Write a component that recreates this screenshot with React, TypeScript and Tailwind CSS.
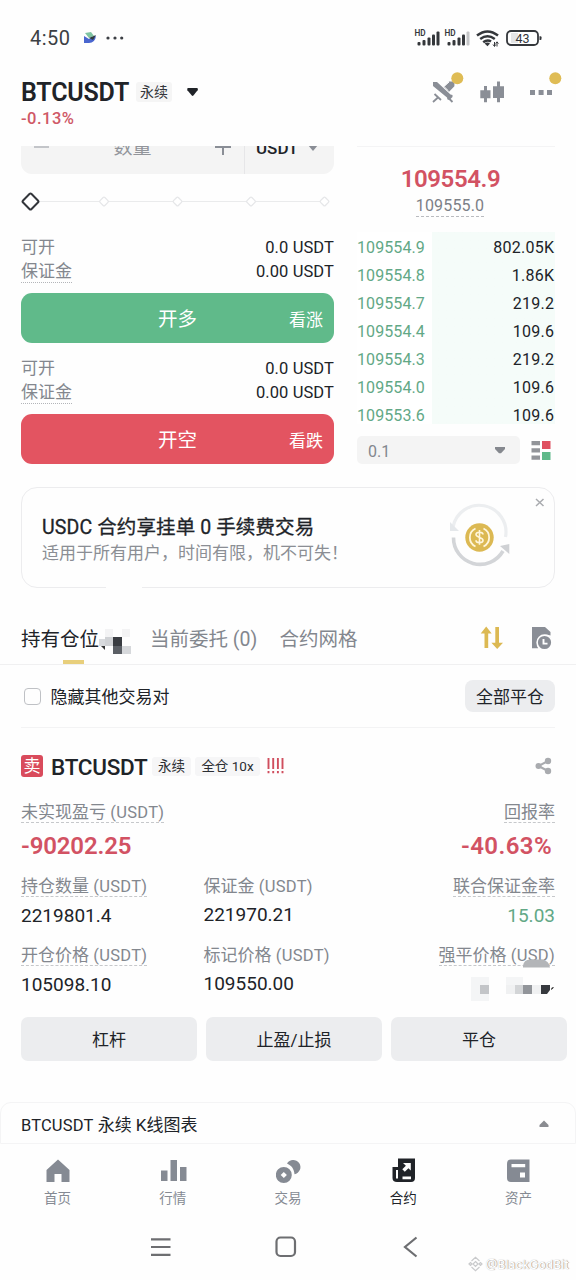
import React from "react";

const GRAY = "text-[#83878e]";

const book = [
  ["109554.9", "802.05K"],
  ["109554.8", "1.86K"],
  ["109554.7", "219.2"],
  ["109554.4", "109.6"],
  ["109554.3", "219.2"],
  ["109554.0", "109.6"],
  ["109553.6", "109.6"],
];

function StatusBar() {
  return (
    <div className="flex h-[72px] items-center pt-[3px] pl-[30px] pr-[34px] text-[#3c3f44]">
      <span className="w-[53px] text-[20px] leading-6 tracking-[0.500px]">4:50</span>
      <svg className="h-[12px] w-[14px]" viewBox="0 0 14 12">
        <path d="M2 1 L8 0 L11 4 L6 6Z" fill="#7fc3a2" />
        <path d="M1 4 L6 7 L13 4 Q12 11 6 11 L1 11Z" fill="#4a66cf" />
        <path d="M6 6 L13 3 L10 8Z" fill="#2f3a40" />
      </svg>
      <svg className="ml-[9px] h-[4px] w-[18px]" viewBox="0 0 18 4" fill="#3c3f44">
        <circle cx="2" cy="2" r="1.600" />
        <circle cx="9" cy="2" r="1.600" />
        <circle cx="15.700" cy="2" r="1.600" />
      </svg>
      <svg className="ml-auto h-[20px] w-[128px]" viewBox="414 27 128 20" fill="#34373b">
        <text x="414.500" y="35.200" fontSize="8.200" fontWeight="600" fontFamily="Roboto, sans-serif">HD</text>
        <rect x="417.500" y="41" width="3" height="3.500" rx="1" />
        <rect x="422.500" y="39" width="3" height="5.500" rx="1" />
        <rect x="427.500" y="36.500" width="3" height="8" rx="1" />
        <rect x="432" y="33.500" width="3" height="11" rx="1" />
        <rect x="436.500" y="30.500" width="3" height="14" rx="1" />
        <text x="444.500" y="35.200" fontSize="8.200" fontWeight="600" fontFamily="Roboto, sans-serif">HD</text>
        <rect x="447.500" y="41" width="3" height="3.500" rx="1" />
        <rect x="452.500" y="39" width="3" height="5.500" rx="1" />
        <rect x="457.500" y="36.500" width="3" height="8" rx="1" />
        <rect x="462" y="33.500" width="3" height="11" rx="1" />
        <rect x="466.500" y="30.500" width="3" height="14" rx="1" fill="#c4c5c7" />
        <g fill="none" stroke="#34373b" strokeWidth="2.500">
          <path d="M477 34.600 Q487.500 26.400 498 34.600" />
          <path d="M480.200 38 Q487.500 32.600 494.800 38" />
          <path d="M483.200 41.200 Q487.500 38 491 40.500" />
        </g>
        <path d="M484.600 42.600 Q487.500 40.400 490 42.400 L487.500 45.200Z" />
        <path d="M494.500 41v4M493 43.500l1.500 2 1.200-2M497 45.500v-4M495.600 42.600l1.400-1.800 1.400 1.800" stroke="#34373b" strokeWidth="1" fill="none" />
        <rect x="507" y="30" width="31" height="14" rx="4" fill="none" stroke="#34373b" strokeWidth="1.800" />
        <rect x="511" y="32" width="7" height="10" fill="#e4e5e6" />
        <path d="M539.500 35.300h1a1 1 0 0 1 1 1v1.600a1 1 0 0 1-1 1h-1z" />
        <text x="515.600" y="41.500" fontSize="12.500" fontWeight="400" fontFamily="Roboto, sans-serif">43</text>
      </svg>
    </div>
  );
}

function Header() {
  return (
    <header className="flex h-[74px] justify-between pl-[21px] pr-[14px]">
      <div>
        <div className="flex h-[40px] items-center">
          <h1 className="w-[115px] pt-[2px] text-[25px] font-semibold leading-[30px] tracking-[-0.200px] text-[#202328] whitespace-nowrap">BTCUSDT</h1>
          <span className="h-[20px] w-[36px] rounded-[3px] bg-[#f5f5f5] text-center text-[14px] leading-[21px] text-[#33363b]">永续</span>
          <svg className="ml-[14px] h-[10px] w-[13px]" viewBox="0 0 13 10">
            <path d="M2 1h9.200q1.400.8.400 2.200L7.400 8.600q-.8.900-1.600 0L1.400 3.200Q.6 1.600 2 1z" fill="#202328" />
          </svg>
        </div>
        <p className="-mt-[4px] text-[16.500px] leading-[21px] font-medium tracking-[0.500px] text-[#cf5866]">-0.13%</p>
      </div>
      <svg className="h-[40px] w-[134px]" viewBox="428 72 134 40" fill="#8a8e96">
        <path d="M433 82h4L450.500 94.500l2 .5v2l-2.800 2.800h-2l-.7-2.300L433 86z" />
        <path d="M449.500 82.500h4V86l-4.500 4.500-4-3.500zM434.500 94l6.500 6M433 102l5.500-5M448 97.500l4.500 4.500" stroke="#8a8e96" strokeWidth="1.800" />
        <path d="M449 82l-5 4.500 4 4" fill="none" stroke="#fefefe" strokeWidth="1" />
        <circle cx="457.300" cy="78.300" r="6" fill="#dfbc55" />
        <path d="M484 86h3v4.300h3.500v8H487v4h-3v-4h-3.700v-8h3.700zM497 81.500h3v4.800h4v11.700h-4v4.300h-3V98h-4V86.300h4z" />
        <path d="M530 90h5v5h-5zM538.600 90h5v5h-5zM547 90h5v5h-5z" />
        <circle cx="555.300" cy="78.300" r="6" fill="#dfbc55" />
      </svg>
    </header>
  );
}

function Margin() {
  return (
    <div className="flex h-[50px] items-start justify-between text-[17px]">
      <div className={`flex flex-col items-start ${GRAY}`}>
        <span className="h-[24px] leading-[25px]">可开</span>
        <span className="h-[24px] border-b border-dotted border-[#b3b5b9] leading-[24px]">保证金</span>
      </div>
      <div className="flex flex-col items-end text-[16.500px] tracking-[0.100px] text-[#202328]">
        <span className="h-[24px] leading-[25px]">0.0 USDT</span>
        <span className="h-[24px] leading-[25px]">0.00 USDT</span>
      </div>
    </div>
  );
}

function TradeButton({ color, title, side }: { color: string; title: string; side: string }) {
  return (
    <button className={`grid h-[50px] w-full grid-cols-3 items-center rounded-[11px] text-white ${color}`}>
      <span />
      <span className="text-center text-[19.500px] leading-[50px]">{title}</span>
      <span className="pr-[11px] text-right text-[17px] leading-[54px]">{side}</span>
    </button>
  );
}

function OrderForm() {
  return (
    <section className="w-[313px]">
      <div className="flex h-[28px] items-end overflow-hidden rounded-b-[11px] bg-[#f4f4f4]">
        <div className="flex h-[40px] w-full">
          <div className="relative flex w-[224px] justify-between border-r border-[#e6e6e8] px-[13px]">
            <svg className="h-[40px] w-[16px]" viewBox="0 0 16 40"><path d="M0 12.900h15" stroke="#c3c5c9" strokeWidth="2" /></svg>
            <span className="text-[19px] leading-[28px] text-[#92959b]">数量</span>
            <svg className="h-[40px] w-[16px]" viewBox="0 0 16 40"><path d="M0 13h16M8 5v16" stroke="#8a8e96" strokeWidth="2" /></svg>
          </div>
          <span className="ml-[11px] w-[43px] text-[17px] font-medium leading-[29px] text-[#202328]">USDT</span>
          <svg className="ml-[9px] h-[40px] w-[10px]" viewBox="0 0 10 40"><path d="M0 11h10L5 17z" fill="#8a8e96" /></svg>
        </div>
      </div>
      <svg className="block h-[59px] w-full" viewBox="21 174 313 59" fill="#fff">
        <path d="M38 201.500H324" stroke="#eaebec" strokeWidth="1.200" />
        {[104, 177.5, 251, 324.5].map((x) => (
          <rect key={x} x={x - 3.4} y="198.100" width="6.800" height="6.800" rx="1.200" stroke="#e6e7e9" strokeWidth="1.300" transform={`rotate(45 ${x} 201.5)`} />
        ))}
        <rect x="24.500" y="195.500" width="12" height="12" rx="1.500" stroke="#33363b" strokeWidth="2" transform="rotate(45 30.500 201.500)" />
      </svg>
      <div className="mt-[2px] mb-[8px]"><Margin /></div>
      <TradeButton color="bg-[#60ba8a]" title="开多" side="看涨" />
      <div className="mt-[13px] mb-[8px]"><Margin /></div>
      <TradeButton color="bg-[#e35461]" title="开空" side="看跌" />
    </section>
  );
}

function OrderBook() {
  return (
    <section className="ml-[23px] w-[198px]">
      <div className="h-[86px] border-t border-[#f4f4f5]">
        <p className="flex h-[44px] items-end justify-center pr-[11px] text-[24px] font-semibold leading-[24px] tracking-[-0.400px] text-[#d25263]">109554.9</p>
        <div className="flex justify-center pt-[2px] pr-[12px]">
          <span className="h-[24px] border-b border-dashed border-[#b9bbbf] text-[16px] leading-[26px] tracking-[0.150px] text-[#7c8087]">109555.0</span>
        </div>
      </div>
      <div className="h-[192px] bg-linear-to-r from-white from-[75px] to-[#f5fcf9] to-[75px] pt-[2px] text-[16px]">
        {book.map(([price, size]) => (
          <div key={price} className="flex h-[28.050px] items-center justify-between pr-[1px] leading-[28px]">
            <span className="tracking-[0.100px] text-[#62a886]">{price}</span>
            <span className="-mr-[0.200px] tracking-[0.250px] text-[#202328]">{size}</span>
          </div>
        ))}
      </div>
      <div className="mt-[12px] flex items-center">
        <div className="flex h-[28px] w-[163px] items-center justify-between rounded-[5px] bg-[#f4f4f4] pl-[11px] pr-[15px] text-[16px] text-[#83878e]">
          <span className="pt-[4px] leading-6">0.1</span>
          <svg className="h-[8px] w-[10px]" viewBox="0 0 10 8"><path d="M0 1h10v2L6 7.300H4L0 3z" fill="#85888e" /></svg>
        </div>
        <svg className="ml-[11px] h-[20px] w-[20px]" viewBox="531 440 20 20" fill="#929499">
          <path d="M531.500 441h8.500v4.300h-8.500zM531.500 448.300h8.500v4.300h-8.500zM531.500 455.500h8.500v4.300h-8.500z" />
          <path d="M542 441h8.500v8h-8.500z" fill="#df5060" />
          <path d="M542 452h8.500v8h-8.500z" fill="#5fb98a" />
        </svg>
      </div>
    </section>
  );
}

function Banner() {
  return (
    <section className="relative mx-[21px] mt-[23px] flex h-[101px] justify-between rounded-[16px] border-[1.500px] border-[#ececee] pl-[20px]">
      <div className="pt-[26px]">
        <p className="text-[19.500px] font-normal leading-[28px] tracking-[0.120px] text-[#202328] [-webkit-text-stroke:0.300px_#202328]">USDC 合约享挂单 0 手续费交易</p>
        <p className="-mt-px text-[17px] leading-[24px] text-[#8b8e94]">适用于所有用户，时间有限，机不可失！</p>
      </div>
      <svg className="h-[98px] w-[110px]" viewBox="444 488 110 98">
        <path d="M536 499l7.500 7M543.500 499l-7.500 7" stroke="#a9abaf" strokeWidth="1.500" />
        <path d="M453 527A26.500 26.500 0 0 1 505.500 537" fill="none" stroke="#eceef0" strokeWidth="3.200" />
        <path d="M450 522v9h9z" fill="#e5e8eb" />
        <path d="M453.500 537.500A26.500 26.500 0 0 0 503 551" fill="none" stroke="#d3d5d8" strokeWidth="3.600" />
        <path d="M500 546l9.300-2v10z" fill="#cfd1d4" />
        <circle cx="479.500" cy="537.500" r="14.200" fill="#dcb953" />
        <path d="M475.500 528.500a10 10 0 0 0 0 18M483.500 528.500a10 10 0 0 1 0 18" fill="none" stroke="#fff6dc" strokeWidth="1.800" />
        <path d="M483 534.600c0-3.200-7-3.200-7 0 0 3.300 7 2.300 7 5.600 0 3.300-7 3.300-7 0M479.500 530v14.800" fill="none" stroke="#fff6dc" strokeWidth="1.600" />
      </svg>
      <span className="absolute -bottom-[2px] left-[84px] h-[3px] w-[36px] bg-[#fefefe]" />
    </section>
  );
}

function Tabs() {
  return (
    <nav className={`mt-[26px] flex h-[51px] border-b border-[#f0f0f1] pl-[21px] text-[19.500px] leading-[52px] ${GRAY}`}>
      <div className="relative w-[129px] text-[#202328]">
        持有仓位
        <svg className="absolute top-[10px] left-[77px] h-[32px] w-[34px]" viewBox="98 624 34 32">
          <path d="M105 629h8v8h-8zM122 629h8v8h-8z" fill="#f3f3f4" />
          <path d="M105 637h8v9h-8z" fill="#d0d2d5" /><path d="M99 639h6v7h-6z" fill="#d8dadd" />
          <path d="M113 637h9v9h-9z" fill="#393c41" /><path d="M113 646h9v8h-9z" fill="#5b5f65" />
          <path d="M122 646h9v8h-9z" fill="#d6d8db" /><path d="M101 646h4v4z" fill="#333" />
        </svg>
        <span className="absolute bottom-0 left-[42px] h-[4px] w-[21px] bg-[#e8cf7c]" />
      </div>
      <span className="w-[129.500px] whitespace-nowrap">当前委托 (0)</span>
      <span>合约网格</span>
      <svg className="ml-auto mr-[24px] mt-[11px] h-[26px] w-[72px]" viewBox="480 625 72 26" fill="#dcb953">
        <path d="M484.500 648v-14.500h-3.800l5.500-7 5.500 7H488.200V648zM495.300 627h3.700v15.800h4l-5.800 6.200-5.800-6.200h3.900z" />
        <path d="M532 627h13l5.500 5v3.500c-5-2-11.500.5-13 6.500-.6 2.500-.3 4.500.7 6.300H532z" fill="#8a8e96" />
        <circle cx="544.500" cy="642.500" r="7.400" fill="#8a8e96" stroke="#fefefe" strokeWidth="1.600" />
        <path d="M543.500 639v4.600h4" fill="none" stroke="#fff" strokeWidth="1.900" />
      </svg>
    </nav>
  );
}

function FilterRow() {
  return (
    <div className="mx-[21px] flex h-[63px] items-center border-b border-[#f3f3f4] text-[17px] text-[#202328]">
      <span className="ml-[2.500px] mr-[10px] h-[17px] w-[17px] rounded-[4px] border-[1.500px] border-[#bfc1c5]" />
      <span className="pt-px leading-[24px]">隐藏其他交易对</span>
      <button className="ml-auto h-[32px] w-[90px] rounded-[8px] bg-[#ecedef] leading-[34px]">全部平仓</button>
    </div>
  );
}

function Label({ children, dotted = false }: { children: React.ReactNode; dotted?: boolean }) {
  return (
    <span className={`block h-[22px] w-fit border-b whitespace-nowrap text-[17px] leading-[23px] ${GRAY} ${dotted ? "border-dashed border-[#c6c8cb]" : "border-transparent"}`}>
      {children}
    </span>
  );
}

function Unit({ children }: { children: string }) {
  return <span className="text-[16.500px] tracking-[0.300px]">{children}</span>;
}

function Position() {
  return (
    <section className="mx-[21px] pt-[23px]">
      <div className="flex h-[30px] items-center">
        <span className="h-[22px] w-[22px] rounded-[3px] bg-[#d94b5c] text-center text-[17px] leading-[22px] text-white">卖</span>
        <h2 className="ml-[8px] w-[101px] pt-[2px] text-[22.500px] font-medium leading-[28px] tracking-[-0.250px] whitespace-nowrap text-[#202328]">BTCUSDT</h2>
        <span className="h-[19px] w-[39px] rounded-[3px] bg-[#f6f6f7] text-center text-[13.500px] leading-[19px] text-[#2b2e33]">永续</span>
        <span className="ml-[4px] h-[19px] w-[65px] rounded-[3px] bg-[#f6f6f7] text-center text-[13.500px] leading-[19px] whitespace-nowrap text-[#2b2e33]">全仓 10x</span>
        <svg className="ml-[7px] h-[16px] w-[17px]" viewBox="0 0 17 16">
          <path d="M1.500 0v11M6.200 0v11M10.900 0v11M15.500 0v11M1.500 13v2.200M6.200 13v2.200M10.900 13v2.200M15.500 13v2.200" stroke="#d04e5e" strokeWidth="1.900" />
        </svg>
        <svg className="ml-auto mr-[3px] h-[18px] w-[17px]" viewBox="0 0 17 18">
          <path d="M3.500 9L13 4M3.500 9L13 14" stroke="#a9abaf" strokeWidth="2" />
          <g fill="#a9abaf"><circle cx="3.500" cy="9" r="3" /><circle cx="13" cy="4" r="3.200" /><circle cx="13" cy="14" r="3.200" /></g>
        </svg>
      </div>
      <div className="mt-[20px] flex justify-between">
        <Label dotted>未实现盈亏 <Unit>(USDT)</Unit></Label>
        <Label dotted>回报率</Label>
      </div>
      <div className="flex h-[46px] justify-between pr-[3px] text-[24px] font-semibold leading-[46px] text-[#d25263]">
        <span className="tracking-[-0.150px]">-90202.25</span>
        <span className="tracking-[0.400px]">-40.63%</span>
      </div>
      <div className="mt-[6px] grid h-[69px] grid-cols-[182.500px_1fr_auto] text-[19px] leading-[37px] text-[#202328]">
        <div>
          <Label dotted>持仓数量 <Unit>(USDT)</Unit></Label>
          2219801.4
        </div>
        <div>
          <Label>保证金 <Unit>(USDT)</Unit></Label>
          <span className="block leading-[35px]">221970.21</span>
        </div>
        <div className="flex flex-col items-end text-[#62a886]">
          <Label dotted>联合保证金率</Label>
          15.03
        </div>
      </div>
      <div className="grid h-[72px] grid-cols-[182.500px_1fr_auto] text-[19px] leading-[37px] text-[#202328]">
        <div>
          <Label dotted>开仓价格 <Unit>(USDT)</Unit></Label>
          105098.10
        </div>
        <div>
          <Label>标记价格 <Unit>(USDT)</Unit></Label>
          <span className="block leading-[35px]">109550.00</span>
        </div>
        <div className="relative flex flex-col items-end">
          <Label dotted>强平价格 <Unit>(USD)</Unit></Label>
          <svg className="absolute top-[13px] right-0 h-[45px] w-[86px]" viewBox="469 958 86 45">
            <path d="M523 968.500v-2q1-6 7-6h12q7 1 8 8z" fill="#b3b5b8" />
            <path d="M471 978h18v24h-18zM506 978h17v8h-17z" fill="#f4f5f6" />
            <path d="M480 986h9v9h-9z" fill="#c3c5c8" /><path d="M515 986h8v9h-8z" fill="#d3d5d7" />
            <path d="M506 986h9v9h-9zM532 986h9v9h-9z" fill="#f0f1f2" />
            <path d="M523 986h9v9h-9z" fill="#92959a" /><path d="M541 986h9v5l-3 4h-6z" fill="#36393e" />
            <path d="M551 991q0-3 3-3-1 2-3 3z" fill="#222" />
          </svg>
        </div>
      </div>
    </section>
  );
}

function Actions() {
  return (
    <div className="mt-px flex h-[44px] gap-[9px] pl-[21px] text-[17px] leading-[46px] text-[#202328]">
      <button className="w-[176px] rounded-[7px] bg-[#ecedef]">杠杆</button>
      <button className="w-[176px] rounded-[7px] bg-[#ecedef]">止盈/止损</button>
      <button className="w-[176px] rounded-[7px] bg-[#ecedef]">平仓</button>
    </div>
  );
}

const icons: Record<string, React.ReactNode> = {
  首页: <path d="M12 1.500L23.500 12v12h-8v-8h-7v8H.5V12z" />,
  行情: <path d="M0 12.500h6.500V23H0zM9.500 2H16v21H9.500zM19 9h6.500v14H19z" />,
  交易: (
    <>
      <path d="M11 5.500a7.200 7.200 0 1 1 7.500 10.700C18 11 16 8 11 5.500z" />
      <path fillRule="evenodd" d="M7.800 9a8 8 0 1 1 0 16 8 8 0 0 1 0-16zm0 5L4.700 17l3.100 3 3.100-3z" />
    </>
  ),
  合约: <path fillRule="evenodd" d="M7 .5h17V20q0 4-4 4H6q-4.500 0-4.500-4V9H7zM5 12v8.500h2V12zm6.500 6.500v2.800h8.500v-2.800zM12 5h7.800v7.500l-2.400-2.300-3.600 3.600-2.500-2.500 3.600-3.500z" />,
  资产: <path fillRule="evenodd" d="M5 1.500h18.500V24H5q-4 0-4-4V6q0-4.500 4-4.500zM5.500 6v3.300h13.700V6zM14 14.500v5h5v-5z" />,
};

function BottomNav() {
  return (
    <>
      <div className="mt-[41px] flex h-[42px] items-center justify-between rounded-t-[11px] border border-[#f4f4f5] pl-[20px] pr-[26px] text-[#202328]">
        <span className="pt-[4px] text-[17px] leading-[24px]"><span className="text-[16.500px] tracking-[0.150px]">BTCUSDT</span> 永续 K线图表</span>
        <svg className="mt-px h-[8px] w-[10px]" viewBox="0 0 10 8"><path d="M5 .5L9.500 5v2h-9V5z" fill="#8a8c91" /></svg>
      </div>
      <nav className="grid h-[72px] grid-cols-5 pt-[14px]">
        {Object.entries(icons).map(([name, icon]) => (
          <div key={name} className={`flex flex-col items-center ${name === "合约" ? "text-[#202328]" : "text-[#858a93]"}`}>
            <svg className="ml-[2px] h-[26px] w-[26px]" viewBox="0 0 26 26" fill="currentColor">{icon}</svg>
            <span className="mt-[4px] text-[13.500px] leading-[20px]">{name}</span>
          </div>
        ))}
      </nav>
      <footer className="h-[64px]">
        <svg className="block h-full w-full" viewBox="0 1216 576 64" fill="none" stroke="#6d6e71" strokeWidth="2.200">
          <path d="M151 1239.300h19.500M151 1247h19.500M151 1254.800h19.500" />
          <rect x="276.500" y="1237.500" width="18.500" height="18.500" rx="4" />
          <path d="M416.500 1237.500l-11.500 9.500 11.500 9.500" />
          <g stroke="#c9cacc" strokeWidth="1.200">
            <path d="M471.500 1261l4-3.700 4 3.700M471.500 1267l4 3.700 4-3.700M475.500 1261.500l2.500 2.500-2.500 2.500-2.500-2.500zM469 1264l1.500-1.500 1.500 1.500-1.500 1.500zM479 1264l1.500-1.500 1.500 1.500-1.500 1.500z" />
          </g>
          <text className="[text-shadow:0.5px_0.8px_1px_#77787c]" x="485.500" y="1268.500" fontSize="12" fontWeight="500" fontFamily="Inter, sans-serif" fill="#fff" stroke="none" textLength="83">@BlackGodBit</text>
        </svg>
      </footer>
    </>
  );
}

export default function App() {
  return (
    <main className="h-[1280px] w-[576px] overflow-hidden bg-[#fefefe] font-['Roboto','Noto_Sans_CJK_SC',sans-serif]">
      <StatusBar />
      <Header />
      <div className="flex h-[318px] pl-[21px]">
        <OrderForm />
        <OrderBook />
      </div>
      <Banner />
      <Tabs />
      <FilterRow />
      <Position />
      <Actions />
      <BottomNav />
    </main>
  );
}
